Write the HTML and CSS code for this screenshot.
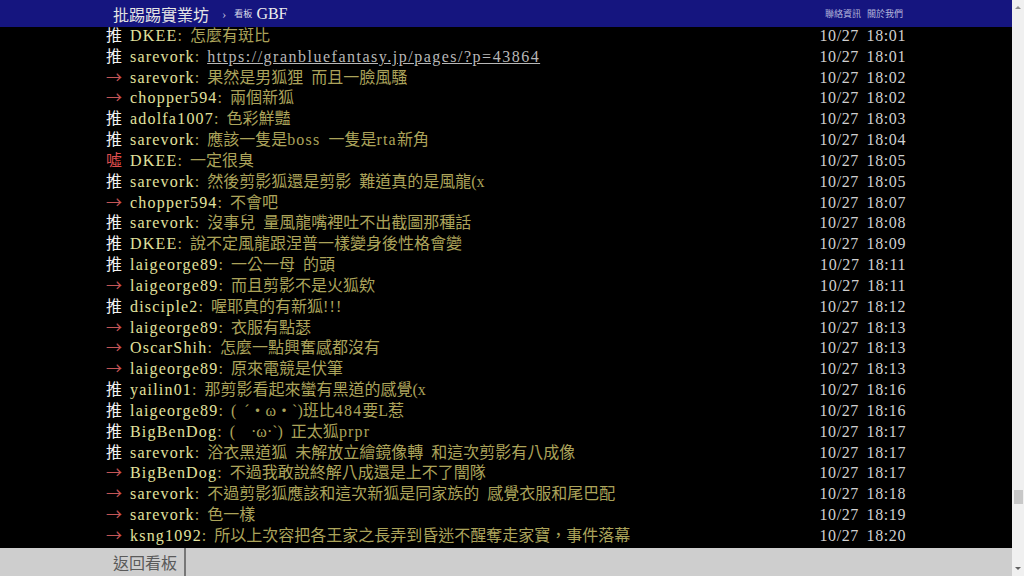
FILE: index.html
```html
<!DOCTYPE html>
<html lang="zh-Hant">
<head>
    <meta charset="UTF-8">
    <meta name="viewport" content="width=device-width, initial-scale=1.0">
    <title>[閒聊] 新狐 - 看板 GBF - 批踢踢實業坊</title>
    <link rel="stylesheet" href="styles.css">
</head>
<body>

    <div class="page">
        <!-- 上方導覽列 -->
        <div class="topbar">
            <div class="topbar-inner">
                <a class="logo" href="#">批踢踢實業坊</a>
                <span class="sep">›</span>
                <a class="board" href="#"><span class="board-label">看板</span> GBF</a>
                <div class="right-links">
                    <a href="#">聯絡資訊</a>
                    <a href="#">關於我們</a>
                </div>
            </div>
        </div>

        <!-- 推文區 -->
        <div class="main">
            <div class="bbs-screen">
                <div class="push"><span class="push-tag">推</span><span class="push-userid">DKEE</span><span class="push-content">: 怎麼有斑比</span><span class="push-ipdatetime">10/27 18:01</span></div>
                <div class="push"><span class="push-tag">推</span><span class="push-userid">sarevork</span><span class="push-content">: <a class="url" href="#">https://granbluefantasy.jp/pages/?p=43864</a></span><span class="push-ipdatetime">10/27 18:01</span></div>
                <div class="push"><span class="push-tag arrow">→</span><span class="push-userid">sarevork</span><span class="push-content">: 果然是男狐狸 而且一臉風騷</span><span class="push-ipdatetime">10/27 18:02</span></div>
                <div class="push"><span class="push-tag arrow">→</span><span class="push-userid">chopper594</span><span class="push-content">: 兩個新狐</span><span class="push-ipdatetime">10/27 18:02</span></div>
                <div class="push"><span class="push-tag">推</span><span class="push-userid">adolfa1007</span><span class="push-content">: 色彩鮮豔</span><span class="push-ipdatetime">10/27 18:03</span></div>
                <div class="push"><span class="push-tag">推</span><span class="push-userid">sarevork</span><span class="push-content">: 應該一隻是<span class="en">boss</span> 一隻是<span class="en">rta</span>新角</span><span class="push-ipdatetime">10/27 18:04</span></div>
                <div class="push"><span class="push-tag boo">噓</span><span class="push-userid">DKEE</span><span class="push-content">: 一定很臭</span><span class="push-ipdatetime">10/27 18:05</span></div>
                <div class="push"><span class="push-tag">推</span><span class="push-userid">sarevork</span><span class="push-content">: 然後剪影狐還是剪影 難道真的是風龍(x</span><span class="push-ipdatetime">10/27 18:05</span></div>
                <div class="push"><span class="push-tag arrow">→</span><span class="push-userid">chopper594</span><span class="push-content">: 不會吧</span><span class="push-ipdatetime">10/27 18:07</span></div>
                <div class="push"><span class="push-tag">推</span><span class="push-userid">sarevork</span><span class="push-content">: 沒事兒 量風龍嘴裡吐不出截圖那種話</span><span class="push-ipdatetime">10/27 18:08</span></div>
                <div class="push"><span class="push-tag">推</span><span class="push-userid">DKEE</span><span class="push-content">: 說不定風龍跟涅普一樣變身後性格會變</span><span class="push-ipdatetime">10/27 18:09</span></div>
                <div class="push"><span class="push-tag">推</span><span class="push-userid">laigeorge89</span><span class="push-content">: 一公一母 的頭</span><span class="push-ipdatetime">10/27 18:11</span></div>
                <div class="push"><span class="push-tag arrow">→</span><span class="push-userid">laigeorge89</span><span class="push-content">: 而且剪影不是火狐欸</span><span class="push-ipdatetime">10/27 18:11</span></div>
                <div class="push"><span class="push-tag">推</span><span class="push-userid">disciple2</span><span class="push-content">: 喔耶真的有新狐<span class="en">!!!</span></span><span class="push-ipdatetime">10/27 18:12</span></div>
                <div class="push"><span class="push-tag arrow">→</span><span class="push-userid">laigeorge89</span><span class="push-content">: 衣服有點瑟</span><span class="push-ipdatetime">10/27 18:13</span></div>
                <div class="push"><span class="push-tag arrow">→</span><span class="push-userid">OscarShih</span><span class="push-content">: 怎麼一點興奮感都沒有</span><span class="push-ipdatetime">10/27 18:13</span></div>
                <div class="push"><span class="push-tag arrow">→</span><span class="push-userid">laigeorge89</span><span class="push-content">: 原來電競是伏筆</span><span class="push-ipdatetime">10/27 18:13</span></div>
                <div class="push"><span class="push-tag">推</span><span class="push-userid">yailin01</span><span class="push-content">: 那剪影看起來蠻有黑道的感覺(x</span><span class="push-ipdatetime">10/27 18:16</span></div>
                <div class="push"><span class="push-tag">推</span><span class="push-userid">laigeorge89</span><span class="push-content">: ( ˊ・ω・ˋ)班比<span class="en">484</span>要L惹</span><span class="push-ipdatetime">10/27 18:16</span></div>
                <div class="push"><span class="push-tag">推</span><span class="push-userid">BigBenDog</span><span class="push-content">: (　·ω·`) 正太狐<span class="en">prpr</span></span><span class="push-ipdatetime">10/27 18:17</span></div>
                <div class="push"><span class="push-tag">推</span><span class="push-userid">sarevork</span><span class="push-content">: 浴衣黑道狐 未解放立繪鏡像轉 和這次剪影有八成像</span><span class="push-ipdatetime">10/27 18:17</span></div>
                <div class="push"><span class="push-tag arrow">→</span><span class="push-userid">BigBenDog</span><span class="push-content">: 不過我敢說終解八成還是上不了闇隊</span><span class="push-ipdatetime">10/27 18:17</span></div>
                <div class="push"><span class="push-tag arrow">→</span><span class="push-userid">sarevork</span><span class="push-content">: 不過剪影狐應該和這次新狐是同家族的 感覺衣服和尾巴配</span><span class="push-ipdatetime">10/27 18:18</span></div>
                <div class="push"><span class="push-tag arrow">→</span><span class="push-userid">sarevork</span><span class="push-content">: 色一樣</span><span class="push-ipdatetime">10/27 18:19</span></div>
                <div class="push"><span class="push-tag arrow">→</span><span class="push-userid">ksng1092</span><span class="push-content">: 所以上次容把各王家之長弄到昏迷不醒奪走家寶，事件落幕</span><span class="push-ipdatetime">10/27 18:20</span></div>
            </div>
        </div>

        <!-- 下方按鈕列 -->
        <div class="navigation">
            <div class="navigation-inner">
                <a class="board-btn" href="#">返回看板</a>
            </div>
        </div>
    </div>

    <!-- 捲軸 -->
    <div class="scrollbar">
        <span class="arrow-up"></span>
        <div class="track"><div class="thumb"></div></div>
        <span class="arrow-down"></span>
    </div>

</body>
</html>
```

FILE: styles.css
```css
body {
    margin: 0;
    height: 100vh;
    display: flex;
    overflow: hidden;
    background-color: #000;
    font-family: 'Liberation Serif', 'Noto Sans CJK TC', serif;
}

a {
    text-decoration: none;
    color: inherit;
}

.page {
    flex: 1;
    display: flex;
    flex-direction: column;
    min-width: 0;
}

/* topbar */
.topbar {
    height: 27px;
    background-color: #15157f;
    flex-shrink: 0;
    position: relative;
    z-index: 1;
}

.topbar-inner {
    box-sizing: border-box;
    width: 800px;
    margin: 0 auto;
    padding-left: 7px;
    padding-right: 3px;
    height: 27px;
    display: flex;
    align-items: center;
}

.logo {
    font-family: 'Noto Sans CJK TC', sans-serif;
    font-size: 16px;
    color: #e4e4e4;
}

.sep {
    font-size: 13px;
    color: #b8b8d8;
    margin: 0 8px 0 13px;
}

.board {
    font-size: 16px;
    color: #eeeeee;
}

.board-label {
    font-family: 'Noto Sans CJK TC', sans-serif;
    font-size: 9px;
    color: #d8d8e8;
    vertical-align: 2px;
}

.right-links {
    margin-left: auto;
    display: flex;
    gap: 6px;
}

.right-links a {
    font-family: 'Noto Sans CJK TC', sans-serif;
    font-size: 9px;
    color: #b4b6dc;
}

/* content */
.main {
    flex: 1;
    overflow: hidden;
}

.bbs-screen {
    width: 800px;
    margin: -1px auto 0;
    font-size: 16px;
    line-height: 20.83px;
}

.push {
    height: 20.83px;
    white-space: pre;
}

.push-tag {
    display: inline-block;
    width: 24px;
    line-height: 17px;
    font-family: 'Noto Sans CJK TC', sans-serif;
    color: #f2f2f2;
}

.push-tag.arrow {
    color: #c45555;
}

.push-tag.boo {
    color: #dc4c4c;
}

.push-userid {
    color: #e2e29e;
    letter-spacing: 1.2px;
}

.push-content {
    color: #aba35a;
    word-spacing: 4px;
}

.push-content .en {
    letter-spacing: 1.2px;
}

.url {
    color: #b8b8b8;
    text-decoration: underline;
    letter-spacing: 1.5px;
}

.push-ipdatetime {
    float: right;
    color: #d0d0d0;
    letter-spacing: 0.6px;
    word-spacing: 3px;
}

/* bottom bar */
.navigation {
    height: 28px;
    background-color: #cecece;
    flex-shrink: 0;
}

.navigation-inner {
    width: 800px;
    margin: 0 auto;
    height: 28px;
    display: flex;
}

.board-btn {
    font-family: 'Noto Sans CJK TC', sans-serif;
    font-size: 16px;
    color: #5a5a5a;
    line-height: 28px;
    padding: 0 7px 0 7px;
    border-right: 2px solid #777;
}

/* scrollbar */
.scrollbar {
    width: 12px;
    background-color: #f0f0f0;
    display: flex;
    flex-direction: column;
    align-items: center;
}

.arrow-up, .arrow-down {
    width: 0;
    height: 0;
    border-left: 3px solid transparent;
    border-right: 3px solid transparent;
    margin: 6px 0;
}

.arrow-up {
    border-bottom: 3px solid #909090;
}

.arrow-down {
    border-top: 3px solid #606060;
}

.track {
    flex: 1;
    width: 100%;
    display: flex;
    justify-content: center;
    padding-top: 475px;
}

.thumb {
    width: 9px;
    height: 14px;
    background-color: #c8c8c8;
}
```
